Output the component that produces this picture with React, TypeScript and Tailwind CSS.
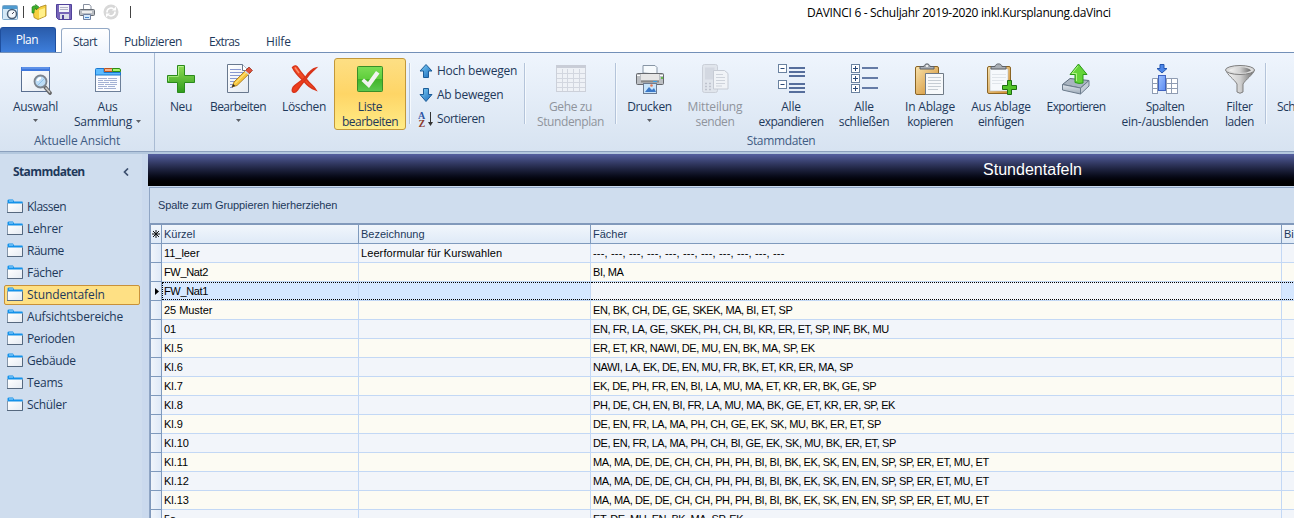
import React from 'react';

type Kids = { children?: React.ReactNode };

const Svg = ({ children, s = 32 }: Kids & { s?: number }) => (
  <svg width={s} height={s} viewBox={`0 0 ${s} ${s}`} className="block shrink-0" fill="none">
    {children}
  </svg>
);

const Defs = () => (
  <svg width="0" height="0" className="absolute">
    <defs>
      <linearGradient id="green" x1="0" y1="0" x2="0" y2="1"><stop offset="0" stopColor="#8fdc55" /><stop offset="1" stopColor="#2f9c1c" /></linearGradient>
      <linearGradient id="check" x1="0" y1="0" x2="0" y2="1"><stop offset="0" stopColor="#7ddd55" /><stop offset=".5" stopColor="#5fce3c" /><stop offset=".52" stopColor="#43b529" /><stop offset="1" stopColor="#5cc850" /></linearGradient>
      <linearGradient id="blue" x1="0" y1="0" x2="1" y2="1"><stop offset="0" stopColor="#7fd0f8" /><stop offset="1" stopColor="#1667b8" /></linearGradient>
      <linearGradient id="paper" x1="0" y1="0" x2="1" y2="1"><stop offset="0" stopColor="#ffffff" /><stop offset="1" stopColor="#e4eaf2" /></linearGradient>
      <linearGradient id="board" x1="0" y1="0" x2="1" y2="1"><stop offset="0" stopColor="#f8e2ac" /><stop offset="1" stopColor="#cf8a28" /></linearGradient>
      <linearGradient id="metal" x1="0" y1="0" x2="1" y2="0"><stop offset="0" stopColor="#f4f4f4" /><stop offset=".5" stopColor="#d0d0d0" /><stop offset="1" stopColor="#6c6c6c" /></linearGradient>
      <linearGradient id="tray" x1="0" y1="0" x2="0" y2="1"><stop offset="0" stopColor="#e2e8ee" /><stop offset="1" stopColor="#9ba9b8" /></linearGradient>
      <linearGradient id="col" x1="0" y1="0" x2="1" y2="1"><stop offset="0" stopColor="#9cc0ff" /><stop offset="1" stopColor="#5c8cf0" /></linearGradient>
    </defs>
  </svg>
);

const WindowSearch = () => (
  <Svg>
    <rect x="1.500" y="4.500" width="28" height="24" fill="url(#paper)" stroke="#5a6f90" />
    <rect x="1" y="4" width="29" height="4" fill="#3f78dd" /><path d="M2 5h27" stroke="#7aa8f2" />
    <path d="M25 24l5 6" stroke="#666" strokeWidth="3.600" strokeLinecap="round" /><path d="M25.500 24.500l4.500 5" stroke="#ccc" strokeWidth="1.500" />
    <circle cx="20.500" cy="18.500" r="6" fill="#bcdcf6" stroke="#7c848e" strokeWidth="1.800" />
    <path d="M17.500 18a4 4 0 013.500-3" stroke="#fff" strokeWidth="2" /><path d="M18 22l6-6" stroke="#8fc0ea" />
  </Svg>
);
const TabsWindow = () => (
  <Svg>
    <rect x="3.500" y="9" width="25" height="19.500" fill="#fbfcff" stroke="#6d7f98" />
    <path d="M3.500 12V6.500Q3.500 5.500 4.500 5.500H12v4h16.500V12z" fill="#5cbcff" stroke="#1b78d0" />
    <path d="M12.500 5.500h8v3h-8z" fill="#f7b088" stroke="#b85420" /><path d="M20.500 5.500h6.500q1.500 0 1.500 1.500v1.500h-8z" fill="#a8f270" stroke="#2c8f14" />
    <path d="M6 15.500h9m1 0h9M6 17.500h5m1 0h13M6 19.500h11m1 0h7M6 21.500h6m1 0h12M6 23.500h9m1 0h7M6 25.500h5m1 0h12" stroke="#a3b1d4" />
  </Svg>
);
const Plus = () => (
  <Svg><path d="M12.500 2.500h7v10h10v7h-10v10h-7v-10h-10v-7h10z" fill="url(#green)" stroke="#2a8a1c" /><path d="M13.500 12.500v-9h5" stroke="#b8f090" /><path d="M3.500 18v-4.500h10" stroke="#a0e478" /></Svg>
);
const Edit = () => (
  <Svg>
    <path d="M5.500 1.500h15l6 6v22h-21z" fill="url(#paper)" stroke="#68788e" /><path d="M20.500 1.500v6h6" fill="#fff" stroke="#68788e" />
    <path d="M8 6.500h11M8 9.500h13M8 12.500h10M8 15.500h9M8 18.500h6M8 21.500h4M8 24.500h3" stroke="#8898d0" />
    <path d="M10 24l2-5L25.500 5.500l3.500 3.500L15 22.500z" fill="#f7c63c" stroke="#a06c10" strokeWidth=".8" /><path d="M13 20.500L26.500 7" stroke="#fff0a0" />
    <path d="M23.500 7.500L27 4l3.500 3.500-4 3.500z" fill="#e0503a" stroke="#902a1c" strokeWidth=".7" /><path d="M23 8l4 3.500" stroke="#d5d9e0" strokeWidth="1.500" /><path d="M10 24l1.200-3 2 1.900z" fill="#222" />
  </Svg>
);
const RedX = () => (
  <Svg>
    <path d="M4.500 4.500C7 1.500 9 3 10.500 5.500C13 10 17 13 19 17C22 21 25.500 23 28 27C24 25.500 21 24.500 17 19.500C14 16 8 12 4.500 4.500z" fill="#f04a24" stroke="#d8341a" strokeWidth="1.400" />
    <path d="M28 5c-4 1-7 4-10 8.500C13 19 8 20 5 24.500c-2.500 5 1.500 6.500 4.500 2.500C13 22 15 20 18 16c3-5 6-7 10-11z" fill="#ee3c1c" stroke="#d8341a" strokeWidth="1.400" />
    <path d="M7 4.500l4 5.500" stroke="#ff9070" strokeWidth="1.300" />
  </Svg>
);
const Check = () => (
  <Svg>
    <rect x="3.500" y="3.500" width="25" height="25" rx="1" fill="url(#check)" stroke="#3a8f28" />
    <path d="M7.500 18l2.500-2.500 4 3.500L22 8l3.500 2.500L15 25z" fill="#f1f3f0" />
  </Svg>
);
const ScheduleGrid = () => (
  <Svg>
    <rect x="1.500" y="2.500" width="29" height="26" fill="#eef1f6" stroke="#ccd0d9" /><rect x="1" y="2" width="30" height="3" fill="#c9cdd7" />
    <path d="M7.500 6v22M12.500 6v22M18.500 6v22M24.500 6v22M2 10.500h28M2 15.500h28M2 19.500h28M2 24.500h28" stroke="#d2d6df" />
  </Svg>
);
const Printer = () => (
  <Svg>
    <path d="M9 10V2.500h12l2 2V11z" fill="#f6fafd" stroke="#8795a5" />
    <rect x="2.500" y="10.500" width="27" height="11" rx="1" fill="#bcbfc3" stroke="#66696e" /><path d="M7 11h18v6H7z" fill="#e6e6e6" />
    <path d="M3 12.500h3M26 12.500h3" stroke="#fff" /><path d="M7 18.500h18" stroke="#888" strokeWidth="2" /><path d="M19 18.500h4" stroke="#3aa0e8" />
    <circle cx="28" cy="15" r="1" fill="#48b828" />
    <rect x="9.500" y="20.500" width="13" height="10" fill="#c8e4fa" stroke="#6d7c92" /><path d="M11 29l4-5 3 3 2-2 2 4z" fill="#3a78c8" /><circle cx="17.500" cy="22.500" r="1.300" fill="#e87850" />
  </Svg>
);
const Message = () => (
  <Svg>
    <rect x="3.500" y="1.500" width="15" height="28" rx="2" fill="#e0e5ec" stroke="#cacfd8" /><rect x="6" y="4.500" width="9.500" height="12" fill="#d3d8e1" />
    <path d="M6 20.500h2m2 0h2m2 0h2M6 23.500h2m2 0h2M6 26.500h2m2 0h2" stroke="#bec3cd" strokeWidth="1.500" />
    <path d="M14.500 7.500h11l3.500 3v15.500H14.500z" fill="#f0f3f7" stroke="#c6cbd4" /><path d="M17 11.500h7M17 14.500h9M17 17.500h9M17 20.500h9M17 23h6" stroke="#ced3db" />
  </Svg>
);
const Expand = () => (
  <Svg>
    {[2, 18].map((y) => (
      <g key={y}><rect x="3.500" y={y - .5} width="8" height="8" fill="#fff" stroke="#6a82a0" /><path d={`M5.500 ${y + 3.500}h4`} stroke="#2c4a78" />
        <path d={`M14 ${y + 3}h16M14 ${y + 7}h16M14 ${y + 11}h16`} stroke="#566e9c" strokeWidth="1.800" /></g>
    ))}
  </Svg>
);
const Collapse = () => (
  <Svg>
    {[2, 12, 22].map((y) => (
      <g key={y}><rect x="3.500" y={y - .5} width="8" height="8" fill="#fff" stroke="#6a82a0" /><path d={`M5 ${y + 3.500}h5M7.500 ${y + 1}v5`} stroke="#2c4a78" />
        <path d={`M14 ${y + 3}h16`} stroke="#566e9c" strokeWidth="1.800" /></g>
    ))}
  </Svg>
);
const Copy = () => (
  <Svg>
    <rect x="1.500" y="3.500" width="23" height="28" rx="1.500" fill="url(#board)" stroke="#8a6424" />
    <path d="M6 6V3.500h4C10.500 0 15.500 0 16 3.500h4V6z" fill="#a8adb4" stroke="#5c6168" /><circle cx="13" cy="3" r="1" fill="#fff" />
    <path d="M11.500 10.500h18v21h-18z" fill="#f7f9fb" stroke="#6f7a86" /><path d="M14 14.500h13M14 17.500h13M14 20.500h13M14 23.500h13M14 26.500h10" stroke="#c6cdd4" />
  </Svg>
);
const Paste = () => (
  <Svg>
    <rect x="2.500" y="3.500" width="23" height="27" rx="1.500" fill="url(#board)" stroke="#8a6424" /><rect x="5" y="6" width="18" height="22" fill="#f6f9fc" stroke="#b8bcc0" strokeWidth=".6" />
    <path d="M6 6V3.500h4C10.500 0 16.500 0 17 3.500h4V6z" fill="#a8adb4" stroke="#5c6168" /><path d="M7 11.500h14M7 14.500h14M7 17.500h12M7 20.500h10" stroke="#e0e5ea" />
    <path d="M22.500 17.500h4v5h5v4h-5v5h-4v-5h-5v-4h5z" fill="#52c428" stroke="#1f6e12" />
  </Svg>
);
const Export = () => (
  <Svg>
    <path d="M2.500 21.500L10 15.500l19 2-8.500 7.500z" fill="#a9b4c0" stroke="#5c6c7c" /><path d="M2.500 21.500l18 3.500v6l-18-4z" fill="url(#tray)" stroke="#6c7c8c" /><path d="M20.500 25l8.500-7.500v5.500l-8.500 8z" fill="#c3ccd6" stroke="#6c7c8c" />
    <path d="M18.500 1l8.500 10.500h-4V20q-4 1-8-.5v-8h-5z" fill="#64d438" stroke="#2b9a18" /><path d="M18 3l-6 7.500h4.500V18" stroke="#b4f488" />
  </Svg>
);
const Columns = () => (
  <Svg>
    <path d="M4 16h4v4H4zM4 21h4v4H4zM4 26h4v4H4zM18 16h4v4h-4zM23 16h5v4h-5zM18 21h4v4h-4zM23 21h5v4h-5zM18 26h4v4h-4zM23 26h5v4h-5z" fill="#fff" />
    <path d="M3.500 15.500h25v15M3.500 30.500v-15M8.500 15.500v15M17.500 15.500v15M22.500 15.500v15M3.500 20.500h25M3.500 25.500h25M3 30.500h6M17 30.500h12" stroke="#8f9cb2" />
    <rect x="9.500" y="12.500" width="7" height="15" fill="url(#col)" stroke="#3f62c0" /><path d="M11 1.500h4v4h3L13 10 8 5.500h3z" fill="#4c86e8" stroke="#2456b0" />
  </Svg>
);
const Funnel = () => (
  <Svg>
    <path d="M2 7c1 5 8 9 11 14v8q3 2.500 6 0v-8c3-5 10-9 11.500-14z" fill="url(#metal)" stroke="#808080" />
    <ellipse cx="16" cy="7" rx="14.500" ry="4.500" fill="#dcdcdc" stroke="#7e7e7e" /><path d="M5 7.500q4-3.500 12-3.500 8 .5 10 3.500-4 2.500-11 2.500T5 7.500z" fill="url(#metal)" />
  </Svg>
);
const BlueArrow = ({ down }: { down?: boolean }) => (
  <Svg s={16}><path d={down ? 'M5.500 1.500h5v6h3.500L8 14.500 2 7.500h3.500z' : 'M8 1.500l6 6.500h-3.500v6.500h-5V8H2z'} fill="url(#blue)" stroke="#1c5c98" /></Svg>
);
const SortAZ = () => (
  <Svg s={16}>
    <text x="0" y="7.500" fontSize="10" fontWeight="700" fontFamily="Liberation Serif, serif" fill="#2e54a4">A</text>
    <text x="0.500" y="15.500" fontSize="10" fontWeight="700" fontFamily="Liberation Serif, serif" fill="#8a3a2c">Z</text>
    <path d="M12.500 1v12" stroke="#333" /><path d="M10 11l2.500 4 2.500-4z" fill="#333" />
  </Svg>
);
const Folder = () => (
  <svg width="16" height="16" viewBox="0 0 16 16" className="block shrink-0">
    <path d="M1 14V2.500Q1 1.500 2 1.500h4l1 1.500h8.500V14z" fill="#1b92e4" />
    <path d="M1 4.500h14v9.500H1z" fill="url(#paper)" /><path d="M.5 14V4" fill="none" stroke="#8797aa" /><path d="M0 13.500h15.500V4.500" fill="none" stroke="#56687e" />
    <path d="M.5 4V1.500Q.5.5 2 .5h4l1 2h8.500V4H1" fill="#1492ea" /><path d="M2 2h4" stroke="#a8dcff" />
  </svg>
);

const Caret = () => <svg width="5" height="3" viewBox="0 0 5 3" className="block"><path d="M0 0h5L2.500 3z" fill="#5c5f66" /></svg>;

type BtnProps = { w: string; icon: React.ReactNode; a: string; b?: string; at?: string; bt?: string; caret?: 'below' | 'inline'; off?: boolean };
const Btn = ({ w, icon, a, b, at = '', bt = '', caret, off }: BtnProps) => (
  <button className={`flex shrink-0 flex-col items-center whitespace-nowrap pt-[10px] leading-[15px] ${w} ${off ? 'text-[#8f949c]' : 'text-[#1e395b]'}`}>
    {icon}
    <span className={`mt-[4px] ${at}`}>{a}</span>
    {caret === 'below' && <span className="pt-[5px]"><Caret /></span>}
    {b && <span className={`flex items-center gap-[4px] ${bt}`}>{b}{caret === 'inline' && <Caret />}</span>}
  </button>
);
const Sep = () => <div className="mt-[10px] h-[61px] w-[2px] shrink-0 border-r border-l border-l-[#b4c4da] border-r-[#f5f9fd]" />;

const Quick = () => (
  <div className="flex h-[24px] shrink-0 items-center text-[#333]">
    <div className="flex w-[210px] items-center pl-[2px]">
      <Svg s={16}><rect x=".5" y="1.500" width="15" height="14" rx="1" fill="#d4e8f6" stroke="#7da7c8" /><path d="M1 2h14v3H1z" fill="#4f9bd0" /><circle cx="10" cy="10" r="4.500" fill="#f4f8fb" stroke="#4a6078" strokeWidth="1.500" /><path d="M10 10l2-2" stroke="#445" /></Svg>
      <span className="ml-[5px] h-[12px] w-px bg-[#444]" />
      <span className="ml-[7px]"><Svg s={16}><path d="M2 4l5 1 2-2 6-2v11l-8 3.500-4-2z" fill="#f6d040" stroke="#a8841c" strokeWidth=".8" /><path d="M8 6l6-2v8l-6 2.500z" fill="#fff08a" /><path d="M1 9V3q2-2 4-1l-.5-1.500L8 3 5 6V4Q3 4 3 9z" fill="#3fb02c" stroke="#1d7a18" strokeWidth=".6" /></Svg></span>
      <span className="ml-[9px]"><Svg s={16}><path d="M.5.500h15v15h-13l-2-2z" fill="#7765b8" stroke="#50429a" /><path d="M3 1h10v7H3z" fill="#f4f4fa" /><path d="M4 3.500h8M4 5.500h8" stroke="#b4b4c8" /><path d="M4 10h9v5H4z" fill="#dcdce8" /><path d="M6 11h2v4H6z" fill="#50429a" /></Svg></span>
      <span className="ml-[7px]"><Svg s={16}><path d="M4.500 6V.500h6l1.500 2V6" fill="#fff" stroke="#8890a0" /><rect x=".5" y="5.500" width="15" height="6" rx="1" fill="#b8bcc2" stroke="#666c74" /><path d="M3 8h10" stroke="#eee" strokeWidth="2" /><path d="M4.500 10.500h7v5h-7z" fill="#d4e8fa" stroke="#7080a0" /><path d="M6 13.500h4" stroke="#4888d0" /></Svg></span>
      <span className="ml-[8px]"><Svg s={16}><circle cx="8" cy="8" r="7.500" fill="#d8d8d8" /><path d="M4 8.500a4 4 0 016.500-3.500M12 7.500a4 4 0 01-6.500 3.500" stroke="#fff" strokeWidth="1.600" /><path d="M9 6.500h4V2.500zM7 9.500H3v4z" fill="#fff" /></Svg></span>
      <span className="ml-[11px] h-[12px] w-px bg-[#444]" />
    </div>
    <div className="ml-[597px] pt-px whitespace-nowrap text-[12px] tracking-[-0.31px] text-black">DAVINCI 6 - Schuljahr 2019-2020 inkl.Kursplanung.daVinci</div>
  </div>
);

const tabs = [
  { t: 'Publizieren', c: 'w-[85px] tracking-[-0.4px]' },
  { t: 'Extras', c: 'w-[57px] tracking-[-0.7px]' },
  { t: 'Hilfe', c: 'w-[40px] tracking-[-0.2px]' },
];

const nav = [
  { t: 'Klassen', c: 'tracking-[-0.5px]' }, { t: 'Lehrer', c: 'tracking-[-0.2px]' }, { t: 'Räume', c: 'tracking-[-0.5px]' },
  { t: 'Fächer', c: 'tracking-[-0.3px]' }, { t: 'Stundentafeln', c: 'tracking-[-0.1px]' }, { t: 'Aufsichtsbereiche', c: 'tracking-[-0.2px]' },
  { t: 'Perioden', c: 'tracking-[-0.35px]' }, { t: 'Gebäude', c: 'tracking-[-0.3px]' }, { t: 'Teams', c: 'tracking-[-0.2px]' }, { t: 'Schüler', c: 'tracking-[-0.3px]' },
];

const rows: [string, string, string][] = [
  ['11_leer', 'Leerformular für Kurswahlen', '---, ---, ---, ---, ---, ---, ---, ---, ---, ---, ---'],
  ['FW_Nat2', '', 'BI, MA'],
  ['FW_Nat1', '', ''],
  ['25 Muster', '', 'EN, BK, CH, DE, GE, SKEK, MA, BI, ET, SP'],
  ['01', '', 'EN, FR, LA, GE, SKEK, PH, CH, BI, KR, ER, ET, SP, INF, BK, MU'],
  ['Kl.5', '', 'ER, ET, KR, NAWI, DE, MU, EN, BK, MA, SP, EK'],
  ['Kl.6', '', 'NAWI, LA, EK, DE, EN, MU, FR, BK, ET, KR, ER, MA, SP'],
  ['Kl.7', '', 'EK, DE, PH, FR, EN, BI, LA, MU, MA, ET, KR, ER, BK, GE, SP'],
  ['Kl.8', '', 'PH, DE, CH, EN, BI, FR, LA, MU, MA, BK, GE, ET, KR, ER, SP, EK'],
  ['Kl.9', '', 'DE, EN, FR, LA, MA, PH, CH, GE, EK, SK, MU, BK, ER, ET, SP'],
  ['Kl.10', '', 'DE, EN, FR, LA, MA, PH, CH, BI, GE, EK, SK, MU, BK, ER, ET, SP'],
  ['Kl.11', '', 'MA, MA, DE, DE, CH, CH, PH, PH, BI, BI, BK, EK, SK, EN, EN, SP, SP, ER, ET, MU, ET'],
  ['Kl.12', '', 'MA, MA, DE, DE, CH, CH, PH, PH, BI, BI, BK, EK, SK, EN, EN, SP, SP, ER, ET, MU, ET'],
  ['Kl.13', '', 'MA, MA, DE, DE, CH, CH, PH, PH, BI, BI, BK, EK, SK, EN, EN, SP, SP, ER, ET, MU, ET'],
  ['5a', '', 'ET, DE, MU, EN, BK, MA, SP, EK'],
];

const cols = 'grid grid-cols-[11px_197px_232px_691px_40px]';

const Row = ({ r, i }: { r: [string, string, string]; i: number }) => {
  const sel = i === 2;
  const cell = 'h-[19px] border-b border-r border-[#c3d8f5]';
  const inner = `h-[18px] pl-[2px] ${sel ? 'border-y border-dotted border-black leading-[16px]' : 'leading-[18px]'}`;
  const bg = i % 2 ? 'bg-[#fcfbf3]' : 'bg-[#f2f5fa]';
  const active = sel ? 'bg-[#d5e7ff]' : bg;
  return (
    <div className={`${cols} whitespace-nowrap`}>
      <div className="flex h-[19px] items-center justify-center border-r border-b border-[#7f9abd] bg-linear-to-r from-[#f0f5fb] to-[#dfe9f7]">
        {sel && <svg width="4" height="7" viewBox="0 0 4 7" className="ml-[1px]"><path d="M0 0l4 3.500L0 7z" fill="#000" /></svg>}
      </div>
      <div className={`${cell} ${active}`}><div className={`${inner} ${sel ? 'border-l [&>span]:-ml-px' : ''} ${r[0].startsWith('FW') ? 'tracking-[-0.35px]' : 'tracking-[-0.05px]'}`}><span>{r[0]}</span></div></div>
      <div className={`${cell} ${active}`}><div className={`${inner} tracking-[0.09px]`}>{r[1]}</div></div>
      <div className={`${cell} ${bg}`}><div className={`${inner} ${i === 0 ? 'tracking-[0.18px]' : 'tracking-[-0.41px]'}`}>{r[2]}</div></div>
      <div className={`${cell} ${active}`}><div className={inner} /></div>
    </div>
  );
};

export default function App() {
  return (
    <div className="flex h-[518px] w-[1294px] flex-col overflow-hidden bg-white font-['Open_Sans','Noto_Sans',sans-serif] text-[12px]">
      <Defs />
      <Quick />
      <div className="flex h-[29px] shrink-0 items-end border-b border-[#7390b8] leading-none text-[#1e395b]">
        <div className="flex h-[25px] w-[56px] items-center justify-center rounded-t-[3px] border border-b-0 border-[#1f4f9e] bg-linear-to-b from-[#2a5cab] to-[#3d7edb] pr-[2px] tracking-[-0.4px] text-white">Plan</div>
        <div className="-mb-px ml-[5px] flex h-[25px] w-[49px] items-center justify-center rounded-t-[3px] border border-b-0 border-[#93a9c6] bg-linear-to-b from-white to-[#eff5fd] pt-px pr-px tracking-[-0.5px]">Start</div>
        <div className="flex h-[20px] items-center pl-[14px]">
          {tabs.map((t) => <div key={t.t} className={t.c}>{t.t}</div>)}
        </div>
      </div>

      <div className="flex h-[99px] shrink-0 overflow-hidden border-b border-[#8ba0bd] bg-linear-to-b from-[#eff5fd] to-[#d7e3f1]">
        <div className="flex w-[155px] shrink-0 flex-col border-r border-[#a9bbd3]">
          <div className="flex h-[80px]">
            <Btn w="w-[71px]" icon={<WindowSearch />} a="Auswahl" at="tracking-[-0.28px]" caret="below" />
            <Btn w="w-[73px]" icon={<TabsWindow />} a="Aus" b="Sammlung" at="tracking-[-0.3px]" bt="tracking-[-0.2px]" caret="inline" />
          </div>
          <div className="text-center leading-[15px] tracking-[-0.2px] text-[#3f5c84]">Aktuelle Ansicht</div>
        </div>
        <div className="flex w-[1252px] shrink-0 flex-col">
          <div className="flex h-[80px] pl-[7px]">
            <Btn w="w-[38px]" icon={<Plus />} a="Neu" at="tracking-[-0.3px]" />
            <Btn w="w-[76px]" icon={<Edit />} a="Bearbeiten" at="tracking-[-0.55px]" caret="below" />
            <Btn w="w-[56px]" icon={<RedX />} a="Löschen" at="tracking-[-0.35px]" />
            <div className="mr-[3px] ml-[2px] mt-[5px] h-[72px] rounded-[3px] border border-[#c2983a] bg-linear-to-b from-[#fddf84] via-[#fed566] to-[#ffec86] [&>button]:-mt-[6px]">
              <Btn w="w-[70px]" icon={<Check />} a="Liste" b="bearbeiten" at="tracking-[-0.3px]" bt="tracking-[-0.5px]" />
            </div>
            <Sep />
            <div className="flex w-[113px] shrink-0 flex-col pt-[6px] pl-[7px] text-[#1e395b]">
              <div className="flex h-[24px] items-center gap-[3px] whitespace-nowrap tracking-[-0.25px]"><BlueArrow />Hoch bewegen</div>
              <div className="flex h-[24px] items-center gap-[3px] whitespace-nowrap tracking-[-0.25px]"><BlueArrow down />Ab bewegen</div>
              <div className="flex h-[24px] items-center gap-[3px] whitespace-nowrap tracking-[-0.45px]"><SortAZ />Sortieren</div>
            </div>
            <Sep />
            <Btn w="w-[89px]" icon={<ScheduleGrid />} a="Gehe zu" b="Stundenplan" at="tracking-[-0.35px]" bt="tracking-[-0.4px]" off />
            <Sep />
            <Btn w="w-[65px]" icon={<Printer />} a="Drucken" at="tracking-[-0.35px]" caret="below" />
            <Btn w="w-[66px]" icon={<Message />} a="Mitteilung" b="senden" at="tracking-[-0.15px]" bt="tracking-[-0.4px]" off />
            <Btn w="w-[86px]" icon={<Expand />} a="Alle" b="expandieren" at="tracking-[-0.2px]" bt="tracking-[-0.5px]" />
            <Btn w="w-[60px]" icon={<Collapse />} a="Alle" b="schließen" at="tracking-[-0.2px]" bt="tracking-[-0.3px]" />
            <Btn w="w-[72px]" icon={<Copy />} a="In Ablage" b="kopieren" at="tracking-[-0.2px]" bt="tracking-[-0.5px]" />
            <Btn w="w-[70px]" icon={<Paste />} a="Aus Ablage" b="einfügen" at="tracking-[-0.2px]" bt="tracking-[-0.4px]" />
            <Btn w="w-[80px]" icon={<Export />} a="Exportieren" at="tracking-[-0.6px]" />
            <Btn w="w-[98px]" icon={<Columns />} a="Spalten" b="ein-/ausblenden" at="tracking-[-0.5px]" bt="tracking-[-0.28px]" />
            <Btn w="w-[51px]" icon={<Funnel />} a="Filter" b="laden" at="tracking-[-0.3px]" bt="tracking-[-0.4px]" />
            <Sep />
            <div className="shrink-0 pt-[46px] pl-[10px] leading-[15px] tracking-[-0.6px] text-[#1e395b]">Sch</div>
          </div>
          <div className="text-center leading-[15px] tracking-[-0.35px] text-[#3f5c84]">Stammdaten</div>
        </div>
      </div>

      <div className="h-[2px] shrink-0 bg-[#b4c8de]" />

      <div className="flex min-h-0 flex-1 bg-[#cad9ed] text-[#1e395b]">
        <aside className="flex w-[142px] shrink-0 flex-col bg-[#cfddee]">
          <div className="flex h-[36px] items-center justify-between pr-[13px] pl-[13px]">
            <b className="text-[12px] tracking-[-0.6px]">Stammdaten</b>
            <svg width="6" height="8" viewBox="0 0 6 8"><path d="M5 .5L1.500 4 5 7.500" fill="none" stroke="#3c4f6e" strokeWidth="1.700" /></svg>
          </div>
          <ul className="flex flex-col pt-[6px]">
            {nav.map((n, i) => (
              <li key={n.t} className="flex h-[22px] items-center">
                <div className={`ml-[4px] flex h-[20px] w-[136px] items-center gap-[4px] rounded-[2px] border pl-[2px] ${i === 4 ? 'border-[#c8913a] bg-[#fee084]' : 'border-transparent'}`}>
                  <Folder /><span className={n.c}>{n.t}</span>
                </div>
              </li>
            ))}
          </ul>
        </aside>
        <main className="ml-[6px] flex w-[1146px] shrink-0 flex-col overflow-hidden font-['Liberation_Sans',Arial,sans-serif] text-[11px]">
          <div className="flex h-[32px] shrink-0 items-center bg-linear-to-b from-[#5560a0] to-black pl-[835px] text-[16px] tracking-[0.02px] text-white">Stundentafeln</div>
          <div className="mt-px ml-[1px] flex flex-col border-t border-l border-[#8fa5c4] bg-[#cfddee]">
            <div className="flex h-[35px] items-center pl-[8px] tracking-[-0.1px]">Spalte zum Gruppieren hierherziehen</div>
            <div className="border-t-2 border-l border-[#8199bb]">
              <div className={`${cols} h-[19px] border-b border-[#7f9abd] bg-linear-to-b from-[#f1f6fc] to-[#dfeaf7] leading-[18px]`}>
                <div className="flex items-center justify-center border-r border-[#7f9abd]">
                  <svg width="8" height="8" viewBox="0 0 8 8"><path d="M4 0v8M0 4h8M1 1l6 6M7 1L1 7" stroke="#111" /></svg>
                </div>
                <div className="border-r border-[#7f9abd] pl-[2px]">Kürzel</div>
                <div className="border-r border-[#7f9abd] pl-[2px]">Bezeichnung</div>
                <div className="border-r border-[#7f9abd] pl-[2px]">Fächer</div>
                <div className="pl-[2px]">Bi</div>
              </div>
              <div className="text-black">{rows.map((r, i) => <Row key={r[0]} r={r} i={i} />)}</div>
            </div>
          </div>
        </main>
      </div>
    </div>
  );
}
